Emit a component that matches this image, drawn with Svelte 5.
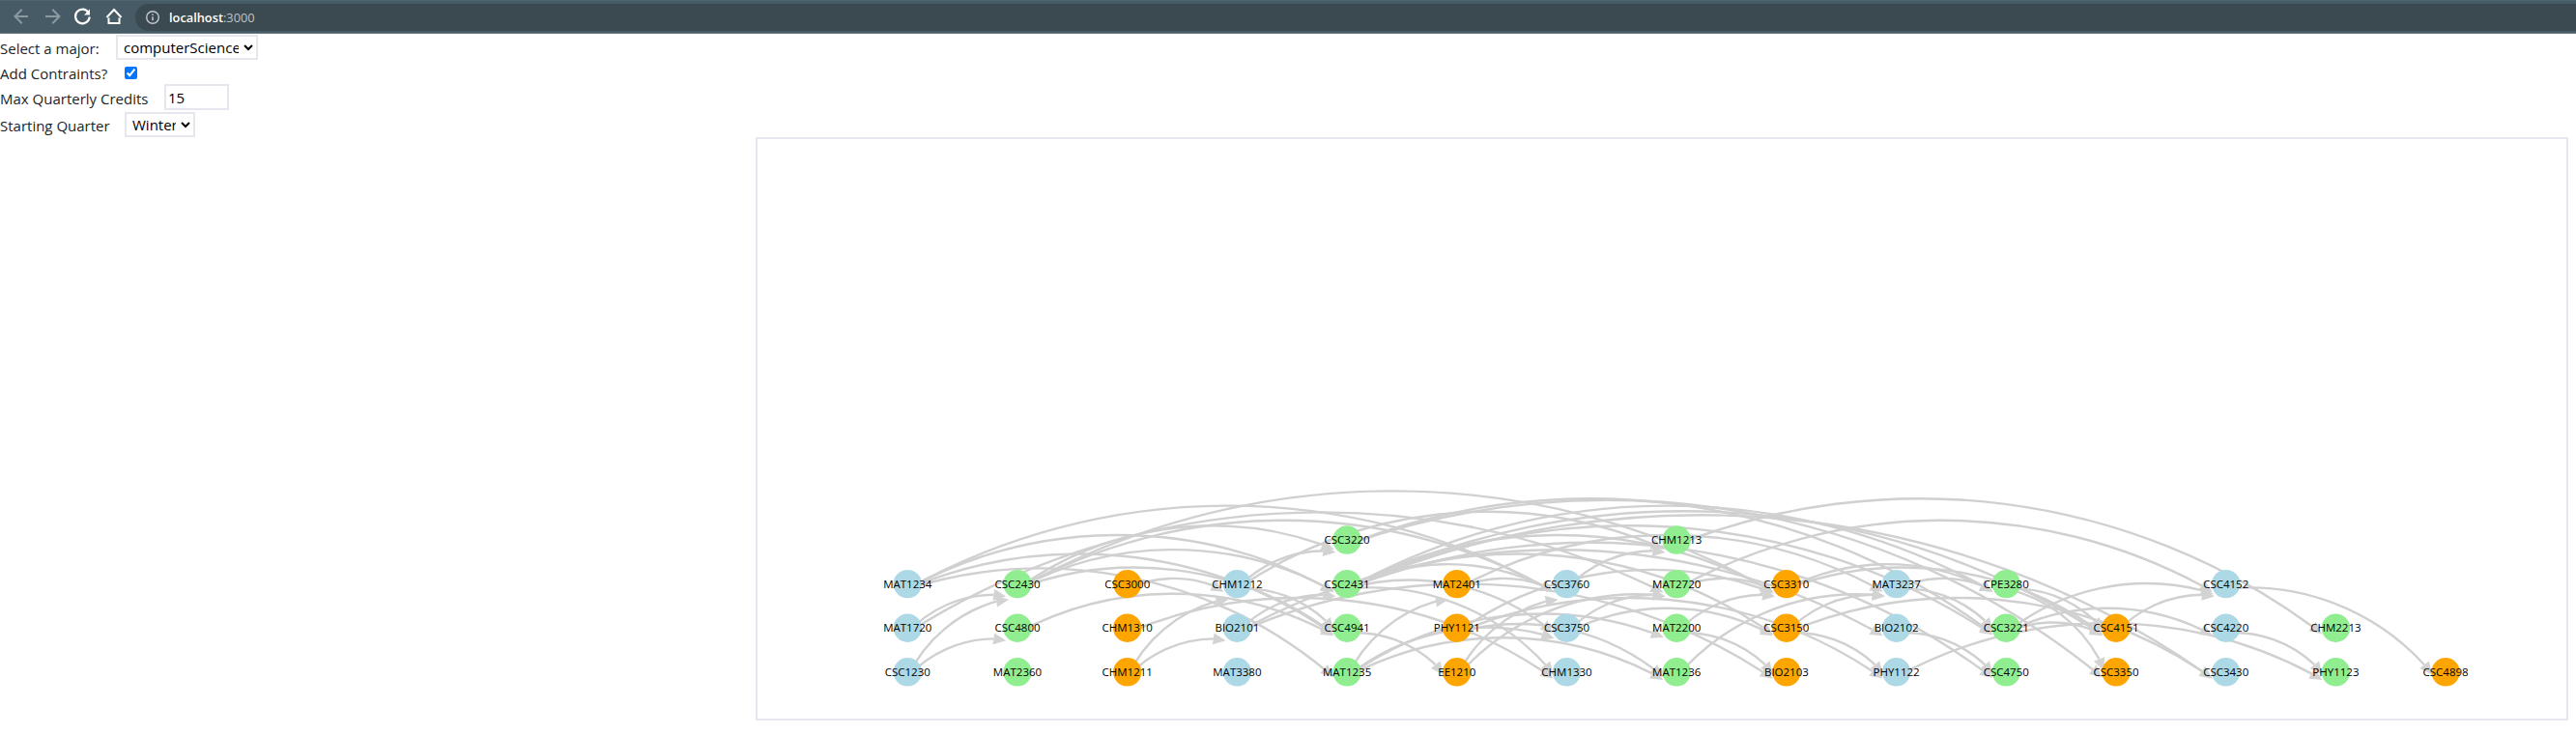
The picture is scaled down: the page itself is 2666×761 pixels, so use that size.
<script>
  const rowY = [559, 604.6, 650.2, 695.8];
  const colX = (c) => 939.3 + c * 113.7;
  const BLUE = '#add8e6', GREEN = '#90ee90', ORANGE = '#ffa500';

  // name, column, row, colour
  const courses = [
    ['MAT1234', 0, 1, BLUE], ['MAT1720', 0, 2, BLUE], ['CSC1230', 0, 3, BLUE],
    ['CSC2430', 1, 1, GREEN], ['CSC4800', 1, 2, GREEN], ['MAT2360', 1, 3, GREEN],
    ['CSC3000', 2, 1, ORANGE], ['CHM1310', 2, 2, ORANGE], ['CHM1211', 2, 3, ORANGE],
    ['CHM1212', 3, 1, BLUE], ['BIO2101', 3, 2, BLUE], ['MAT3380', 3, 3, BLUE],
    ['CSC3220', 4, 0, GREEN], ['CSC2431', 4, 1, GREEN], ['CSC4941', 4, 2, GREEN], ['MAT1235', 4, 3, GREEN],
    ['MAT2401', 5, 1, ORANGE], ['PHY1121', 5, 2, ORANGE], ['EE1210', 5, 3, ORANGE],
    ['CSC3760', 6, 1, BLUE], ['CSC3750', 6, 2, BLUE], ['CHM1330', 6, 3, BLUE],
    ['CHM1213', 7, 0, GREEN], ['MAT2720', 7, 1, GREEN], ['MAT2200', 7, 2, GREEN], ['MAT1236', 7, 3, GREEN],
    ['CSC3310', 8, 1, ORANGE], ['CSC3150', 8, 2, ORANGE], ['BIO2103', 8, 3, ORANGE],
    ['MAT3237', 9, 1, BLUE], ['BIO2102', 9, 2, BLUE], ['PHY1122', 9, 3, BLUE],
    ['CPE3280', 10, 1, GREEN], ['CSC3221', 10, 2, GREEN], ['CSC4750', 10, 3, GREEN],
    ['CSC4151', 11, 2, ORANGE], ['CSC3350', 11, 3, ORANGE],
    ['CSC4152', 12, 1, BLUE], ['CSC4220', 12, 2, BLUE], ['CSC3430', 12, 3, BLUE],
    ['CHM2213', 13, 2, GREEN], ['PHY1123', 13, 3, GREEN],
    ['CSC4898', 14, 3, ORANGE]
  ].map(([name, c, r, fill]) => ({ name, x: colX(c), y: rowY[r], fill }));

  const byName = Object.fromEntries(courses.map((n) => [n.name, n]));

  const links = `CSC1230 CSC2430,CSC1230 CSC4800,MAT1720 CSC2430,MAT1720 MAT2720,
    MAT1234 MAT1235,MAT1234 CSC3760,MAT1234 CSC4941,MAT1234 CSC2431,
    CSC2430 CSC3220,CSC2430 CSC2431,CSC2430 CSC3310,CSC2430 CSC3760,CSC2430 CSC4941,
    CSC4800 CSC4941,CSC3000 CHM1212,
    CHM1310 CHM1330,CHM1211 CHM1212,CHM1211 BIO2101,
    CHM1212 CSC3220,CHM1212 CSC4941,CHM1212 CHM1213,
    BIO2101 CSC2431,BIO2101 BIO2102,BIO2101 BIO2103,
    CSC3220 CSC3221,CSC3220 CSC3350,
    CSC2431 CSC3760,CSC2431 CSC3750,CSC2431 CSC3310,CSC2431 CSC3150,CSC2431 CSC3221,
    CSC2431 CSC3430,CSC2431 CSC4151,CSC2431 CSC4750,CSC2431 CPE3280,CSC2431 CHM1330,
    CSC4941 EE1210,
    MAT1235 MAT2401,MAT1235 MAT1236,MAT1235 MAT2200,MAT1235 CSC3750,
    MAT2401 CSC3760,MAT2401 MAT3237,PHY1121 MAT1236,PHY1121 PHY1122,PHY1121 CSC3310,
    EE1210 CSC3760,EE1210 MAT2720,
    CSC3760 CHM1213,CSC3750 MAT2720,CSC3750 CSC3150,
    CHM1213 CHM2213,MAT2720 CSC3310,MAT2720 CSC4152,MAT2200 CSC3310,MAT2200 BIO2103,
    MAT1236 MAT3237,
    CSC3310 CSC4151,CSC3310 CPE3280,CSC3150 MAT3237,CSC3150 CSC3430,CSC3150 PHY1122,
    MAT3237 CPE3280,MAT3237 CSC3221,BIO2102 CSC4750,PHY1122 PHY1123,
    CPE3280 CSC3350,CPE3280 CSC4151,CSC3221 CSC4152,CSC3221 CSC4220,CSC3221 CSC4151,
    CSC4151 CSC4152,CSC4152 CSC4898,CSC4220 PHY1123`
    .split(',')
    .map((s) => s.trim().split(' '));

  // arcs use radius = chord length, so a chord turns 60 degrees over its length
  function edge([from, to]) {
    const a = byName[from];
    const b = byName[to];
    const dx = b.x - a.x;
    const dy = b.y - a.y;
    const d = Math.hypot(dx, dy);
    const ang = Math.atan2(dy, dx) + Math.PI / 6;
    const t = [Math.cos(ang), Math.sin(ang)];
    const n = [-t[1], t[0]];
    const ex = b.x;
    const ey = b.y + 5;
    const tip = [ex - 10.5 * t[0] + 9.6 * n[0], ey - 10.5 * t[1] + 9.6 * n[1]];
    const base = [tip[0] - 13 * t[0], tip[1] - 13 * t[1]];
    const arrow = [
      tip,
      [base[0] + 6 * n[0], base[1] + 6 * n[1]],
      [base[0] - 6 * n[0], base[1] - 6 * n[1]]
    ].map((p) => p.map((v) => v.toFixed(1)).join(',')).join(' ');
    const path = `M${a.x},${a.y + 5} A${d.toFixed(1)},${d.toFixed(1)} 0 0,1 ${base[0].toFixed(1)},${base[1].toFixed(1)}`;
    return { path, arrow };
  }

  const edges = links.map(edge);
</script>

<header class="toolbar">
  <svg class="nav" width="130" height="35" viewBox="0 0 130 35" fill="none" stroke-linecap="square">
    <path d="M28 17H17M22 10.500l-6.500 6.500 6.500 6.500" stroke="#8b9aa1" stroke-width="2" />
    <path d="M48 17h12M55 10.500l6.500 6.500-6.500 6.500" stroke="#8b9aa1" stroke-width="2" />
    <path d="M91.500 13a7.300 7.300 0 1 0 1 5.500" stroke="#fff" stroke-width="2.200" />
    <path d="M93 9.500v6h-6z" fill="#fff" />
    <path d="M112.500 18.500v5.500h11v-5.500M110.500 18l7.500-8 7.500 8" stroke="#fff" stroke-width="2" stroke-linecap="butt" />
  </svg>
  <div class="omnibox">
    <svg width="16" height="16" viewBox="0 0 16 16" fill="none">
      <circle cx="8" cy="8" r="6.300" stroke="#c4cace" stroke-width="1.400" />
      <path d="M8 7.300v4M8 4.500v1.500" stroke="#c4cace" stroke-width="1.500" />
    </svg>
    <span class="url"><b>localhost</b>:3000</span>
  </div>
</header>

<main>
  <div class="row">
    <label class="w-major" for="major">Select a major:</label>
    <select id="major" class="major"><option>computerScience</option></select>
  </div>
  <div class="row">
    <label class="w-short" for="constraints">Add Contraints?</label>
    <input id="constraints" type="checkbox" checked />
  </div>
  <div class="row">
    <label class="w-credits" for="credits">Max Quarterly Credits</label>
    <input id="credits" class="credits" type="text" value="15" />
  </div>
  <div class="row">
    <label class="w-short" for="quarter">Starting Quarter</label>
    <select id="quarter" class="quarter"><option>Winter</option></select>
  </div>

  <svg class="graph" width="1876" height="604" viewBox="782 142 1876 604">
    {#each edges as e}
      <path class="link" d={e.path} />
      <polygon class="head" points={e.arrow} />
    {/each}
    {#each courses as n}
      <circle cx={n.x} cy={n.y} r="14.7" fill={n.fill} />
      <text x={n.x} y={n.y + 4}>{n.name}</text>
    {/each}
  </svg>
</main>

<style>
  :global(body) {
    margin: 0;
    background: #fff;
    font-family: "Open Sans", "Noto Sans", sans-serif;
  }

  .toolbar {
    height: 35px;
    box-sizing: border-box;
    background: #465b65;
    border-top: 1px solid #4c6370;
    border-bottom: 1px solid #6a7b83;
    display: flex;
    align-items: center;
  }

  .nav {
    flex: none;
    width: 130px;
    margin-right: 10px;
  }

  .omnibox {
    flex: 1;
    height: 28px;
    background: #3b4a51;
    border-radius: 14px 0 0 14px;
    display: flex;
    align-items: center;
    gap: 9px;
    padding-left: 10px;
  }

  .url {
    font: 12.800px "Open Sans", sans-serif;
    color: #bcc4c8;
  }

  .url b {
    font-weight: 600;
    color: #fff;
  }

  main {
    color: #212529;
    font-size: 15px;
  }

  .row {
    display: flex;
    align-items: center;
    min-height: 24px;
  }

  label {
    white-space: nowrap;
    padding-top: 2px;
  }

  .w-major {
    width: 120px;
  }

  .w-short {
    width: 129px;
  }

  .w-credits {
    width: 170px;
  }

  select,
  .credits {
    font: inherit;
    color: #000;
    background: #fff;
    border: 2px solid #e6e6ef;
    border-radius: 0;
    box-sizing: border-box;
    height: 26px;
    padding: 0 2px;
  }

  .major {
    width: 147px;
    margin: 1px 0;
  }

  .quarter {
    width: 73px;
    margin-top: 1px;
  }

  .credits {
    width: 67px;
    height: 27px;
    margin-bottom: 1px;
  }

  input[type="checkbox"] {
    width: 13px;
    height: 13px;
    margin: 0;
    accent-color: #0075ff;
  }

  .graph {
    display: block;
    margin-left: 782px;
    outline: 2px solid #e6e6ef;
    outline-offset: -2px;
  }

  .link {
    fill: none;
    stroke: #d0d0d0;
    stroke-width: 2.400;
  }

  .head {
    fill: #d3d3d3;
  }

  text {
    font: 11.500px "Open Sans", sans-serif;
    text-anchor: middle;
    fill: #000;
  }
</style>
